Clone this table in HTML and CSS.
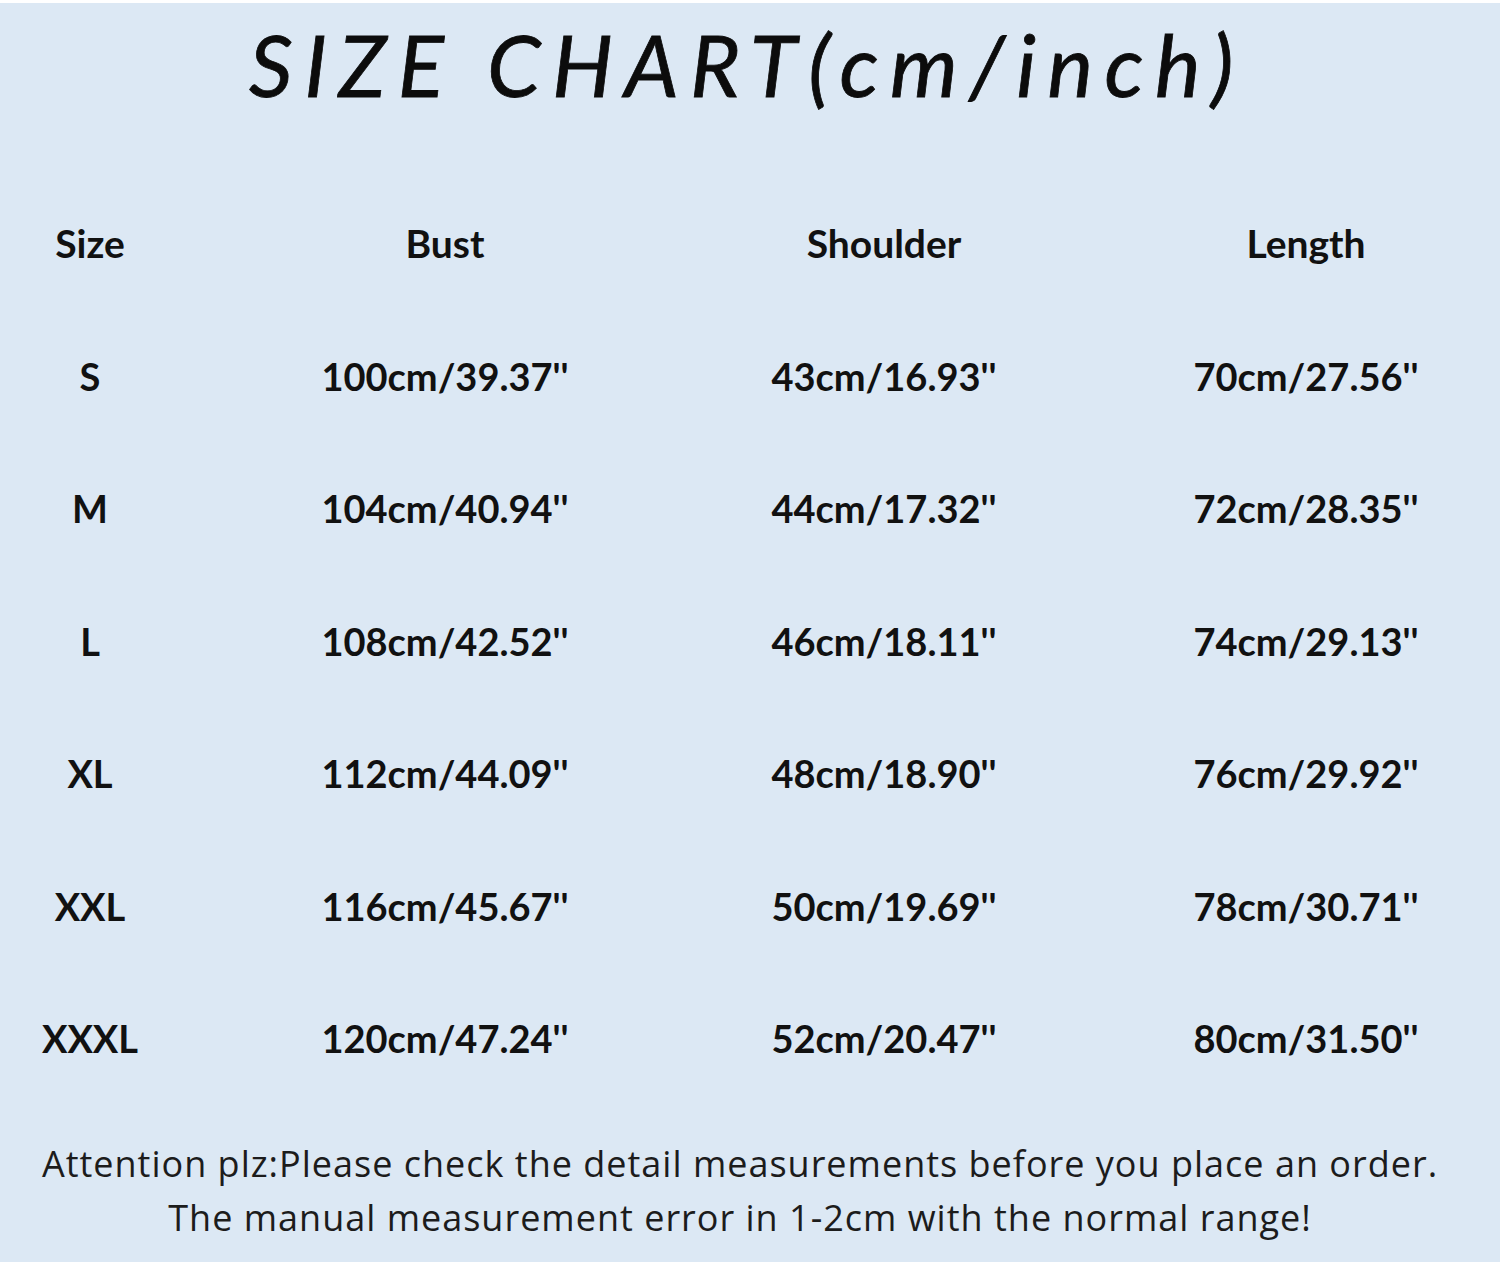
FILE: index.html
```html
<!DOCTYPE html>
<html lang="en">
<head>
<meta charset="utf-8">
<title>Size Chart</title>
<link rel="stylesheet" href="styles.css">
</head>
<body>
<div class="sheet">
  <h1 class="title">SIZE CHART(cm/inch)</h1>
  <div class="chart">
    <div class="cell head c1">Size</div>
    <div class="cell head c2">Bust</div>
    <div class="cell head c3">Shoulder</div>
    <div class="cell head c4">Length</div>

    <div class="cell c1">S</div>
    <div class="cell c2">100cm/39.37''</div>
    <div class="cell c3">43cm/16.93''</div>
    <div class="cell c4">70cm/27.56''</div>

    <div class="cell c1">M</div>
    <div class="cell c2">104cm/40.94''</div>
    <div class="cell c3">44cm/17.32''</div>
    <div class="cell c4">72cm/28.35''</div>

    <div class="cell c1">L</div>
    <div class="cell c2">108cm/42.52''</div>
    <div class="cell c3">46cm/18.11''</div>
    <div class="cell c4">74cm/29.13''</div>

    <div class="cell c1">XL</div>
    <div class="cell c2">112cm/44.09''</div>
    <div class="cell c3">48cm/18.90''</div>
    <div class="cell c4">76cm/29.92''</div>

    <div class="cell c1">XXL</div>
    <div class="cell c2">116cm/45.67''</div>
    <div class="cell c3">50cm/19.69''</div>
    <div class="cell c4">78cm/30.71''</div>

    <div class="cell c1">XXXL</div>
    <div class="cell c2">120cm/47.24''</div>
    <div class="cell c3">52cm/20.47''</div>
    <div class="cell c4">80cm/31.50''</div>
  </div>
  <p class="note">Attention plz:Please check the detail measurements before you place an order.<br>The manual measurement error in 1-2cm with the normal range!</p>
</div>
</body>
</html>
```
FILE: styles.css
```css
html, body {
  margin: 0;
  padding: 0;
  background: #ffffff;
}

body {
  width: 1500px;
  height: 1267px;
  overflow: hidden;
}

.sheet {
  margin-top: 3px;
  height: 1259px;
  background: #dce8f4;
  color: #111111;
  font-family: Lato, "Liberation Sans", sans-serif;
}

.title {
  margin: 0;
  height: 174px;
  box-sizing: border-box;
  padding: 11px 6px 0 0;
  text-align: center;
  font-family: Lato, "Liberation Sans", sans-serif;
  font-style: italic;
  font-weight: 400;
  font-size: 86px;
  line-height: 100px;
  letter-spacing: 11.4px;
  color: #0c0c0c;
  -webkit-text-stroke: 0.8px #0c0c0c;
}

.chart {
  display: grid;
  grid-template-columns: 180px 530px 348px 442px;
  grid-auto-rows: 132.5px;
}

.cell {
  display: flex;
  align-items: center;
  justify-content: center;
  font-weight: 700;
  font-size: 38px;
  line-height: 46px;
  white-space: nowrap;
}

.head {
  font-size: 39px;
}

.c4 {
  padding-left: 54px;
}

.note {
  margin: 0;
  padding: 32px 20px 0 0;
  text-align: center;
  font-family: "Open Sans", Lato, sans-serif;
  font-size: 36px;
  line-height: 54px;
  letter-spacing: 1px;
  font-weight: 400;
  color: #1c1c1c;
}
```
